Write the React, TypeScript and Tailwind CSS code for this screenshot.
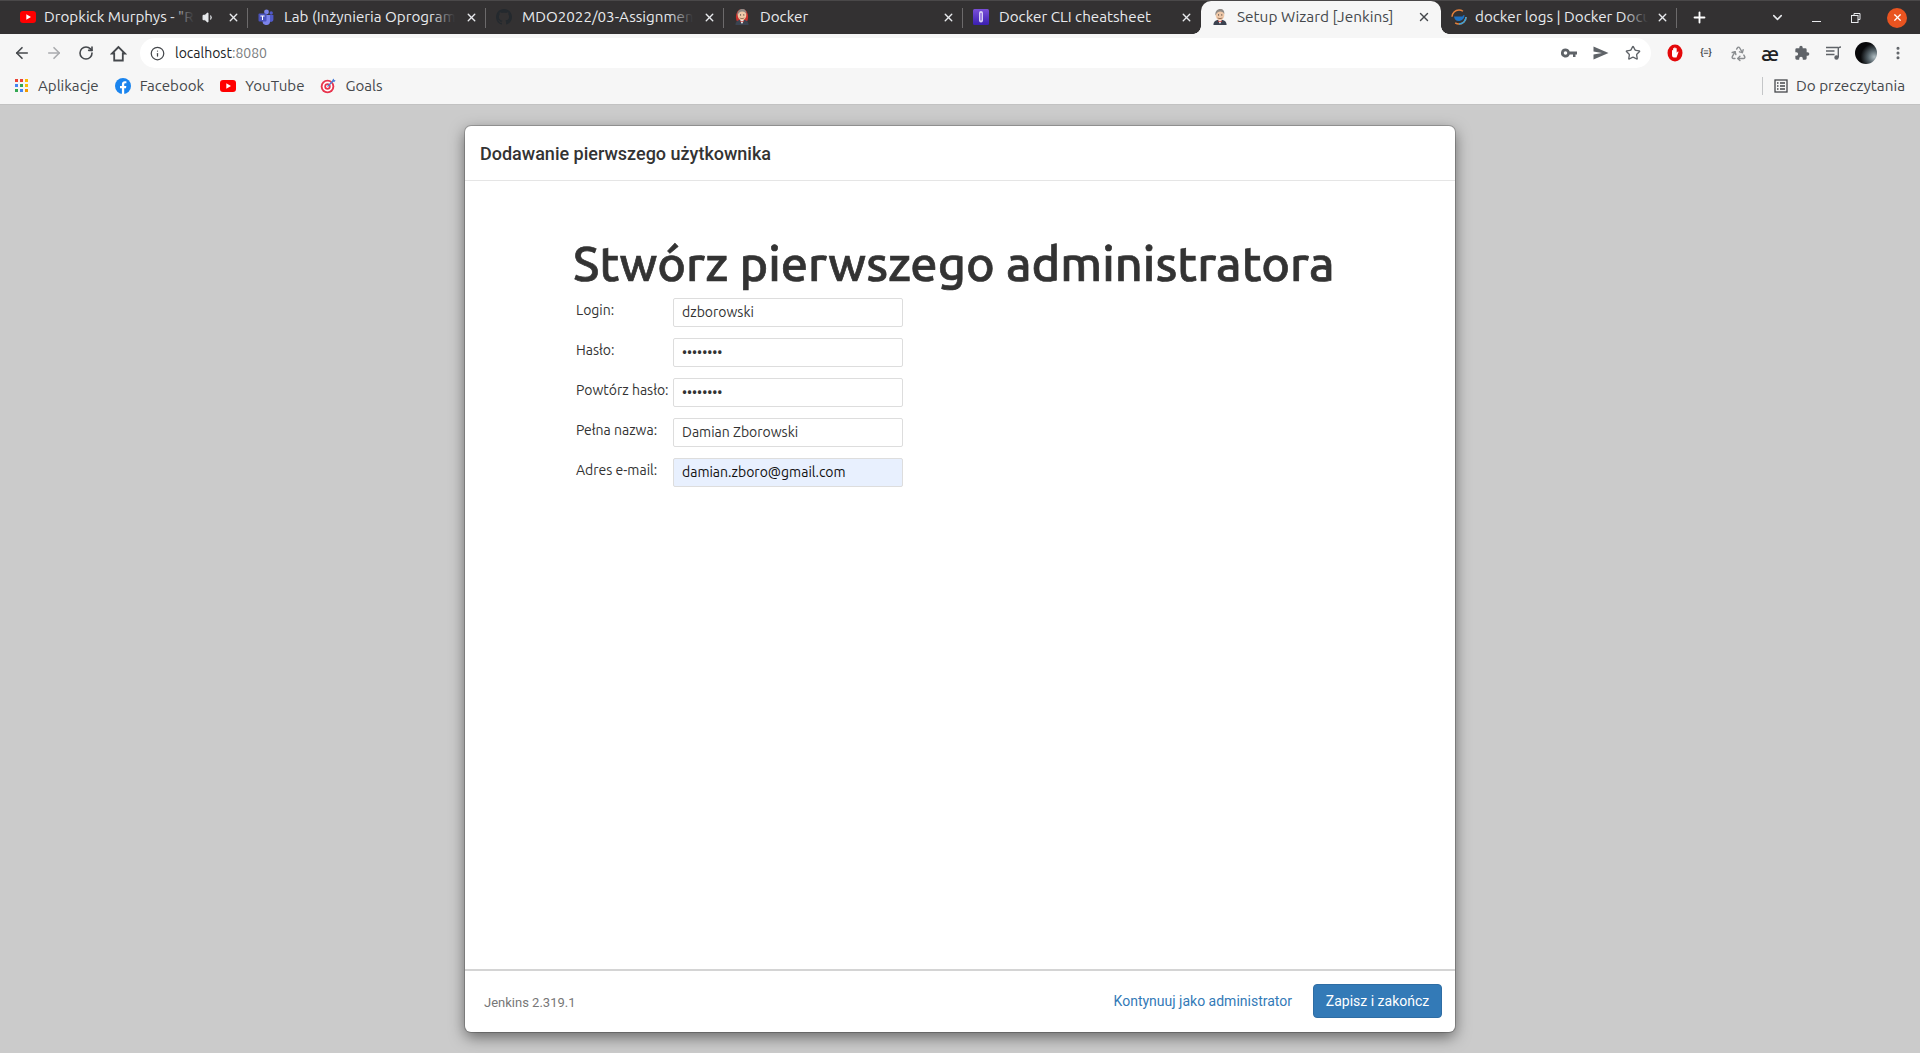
import { ArrowLeft, ArrowRight, RotateCw, Info, Star, MoreVertical, Recycle, X, Plus, ChevronDown, Volume1 } from 'lucide-react'
import { ReactNode } from 'react'

const ubuntu = 'font-["Ubuntu","Noto_Sans",sans-serif]'

function YoutubeIcon() {
  return (
    <svg width="16" height="12" viewBox="0 0 16 12">
      <rect width="16" height="12" rx="3" fill="#f00" />
      <path d="M6.3 3.2v5.6L11 6z" fill="#fff" />
    </svg>
  )
}

function TeamsIcon() {
  return (
    <svg width="16" height="16" viewBox="0 0 16 16">
      <circle cx="8.5" cy="3" r="2.4" fill="#7b83eb" />
      <circle cx="13.2" cy="4" r="1.7" fill="#5059c9" />
      <path d="M11 6h4.4v4.4a2.4 2.4 0 0 1-4.4 1.4z" fill="#5059c9" />
      <path d="M4 6h8v6a3.6 3.6 0 0 1-7.4.6z" fill="#7b83eb" />
      <rect x="0.5" y="4.5" width="8" height="8" rx="1" fill="#4b53bc" />
      <path d="M2.4 6.5h4.2v1H5v3.6H4V7.5H2.4z" fill="#fff" />
    </svg>
  )
}

function GithubIcon() {
  return (
    <svg width="16" height="16" viewBox="0 0 16 16">
      <path
        fill="#24292e"
        d="M8 0C3.6 0 0 3.6 0 8c0 3.5 2.3 6.500 5.500 7.600.4.100.5-.2.5-.4v-1.400c-2.200.5-2.700-1-2.700-1-.4-.9-.9-1.200-.9-1.200-.7-.5.100-.5.100-.5.800.100 1.200.8 1.200.8.700 1.200 1.900.9 2.300.7.100-.5.3-.9.5-1.100-1.800-.2-3.600-.9-3.600-4 0-.9.3-1.600.8-2.100-.1-.2-.4-1 .100-2.100 0 0 .7-.2 2.200.8.600-.2 1.300-.3 2-.3s1.400.1 2 .3c1.500-1 2.200-.8 2.200-.8.4 1.100.2 1.900.1 2.100.5.600.8 1.300.8 2.100 0 3.100-1.900 3.700-3.700 3.900.3.3.6.8.6 1.500v2.200c0 .2.100.5.6.4C13.700 14.500 16 11.500 16 8c0-4.400-3.600-8-8-8z"
      />
    </svg>
  )
}

function JenkinsIcon({ ring }: { ring?: boolean }) {
  return (
    <svg width="17" height="18" viewBox="0 0 17 18">
      {ring && <ellipse cx="8.500" cy="9" rx="6.500" ry="8.500" fill="#c8322e" />}
      <path d="M1.500 17.500c0-3.500 2.500-5.500 7-5.500s7 2 7 5.500z" fill="#3b4350" />
      <path d="M6.500 12h4L9 16H8z" fill="#f4f4f4" />
      <path d="M6.700 12.600l1.800.9 1.800-.9v2l-1.800-.8-1.800.8z" fill="#c3302c" />
      <ellipse cx="8.500" cy="6.800" rx="4.600" ry="5.600" fill="#efc8a8" />
      <path d="M3.700 7.500C3 3 5.500.4 8.800.4c3 0 4.800 2.200 4.200 5.600-.8-1.800-2-2.800-4.200-2.800-2.600 0-4 1.500-5.100 4.300z" fill="#8f8a86" />
      <circle cx="7" cy="6.800" r="0.600" fill="#333" />
      <circle cx="10.400" cy="6.800" r="0.600" fill="#333" />
      <path d="M6 10c1.500.9 3.500.9 5 0" stroke="#7a5a44" strokeWidth="0.800" fill="none" />
    </svg>
  )
}

function ClipIcon() {
  return (
    <svg width="16" height="16" viewBox="0 0 16 16">
      <defs>
        <linearGradient id="clip-grad" x1="0" y1="0" x2="0" y2="1">
          <stop offset="0" stopColor="#7a4fd8" />
          <stop offset="1" stopColor="#3a1fb0" />
        </linearGradient>
      </defs>
      <rect width="16" height="16" rx="1.500" fill="url(#clip-grad)" />
      <rect x="6" y="2" width="4" height="11.500" rx="2" fill="#d9d2f5" />
      <rect x="7.400" y="4" width="1.200" height="7.500" rx="0.600" fill="#7a4fd8" />
    </svg>
  )
}

function DockerDocsIcon() {
  return (
    <svg width="16" height="16" viewBox="0 0 16 16">
      <circle cx="8" cy="8" r="7" fill="none" stroke="#e4803a" strokeWidth="1.500" strokeDasharray="15 7" />
      <circle cx="8" cy="8" r="7" fill="none" stroke="#3aa0d8" strokeWidth="1.500" strokeDasharray="11 33" />
      <path d="M3 7.500h8.500c.4-1 1-1.500 2-1.500 0 3.500-2.500 6-6 6C5 12 3.300 10 3 7.500z" fill="#1d72c4" />
    </svg>
  )
}

function FacebookIcon() {
  return (
    <svg width="16" height="16" viewBox="0 0 16 16">
      <circle cx="8" cy="8" r="8" fill="#1a84ee" />
      <path d="M6.900 16V10.300H5V8h1.900V6.300c0-2 1.200-3 2.900-3 .9 0 1.600.1 1.600.1v1.900h-1c-1 0-1.200.6-1.200 1.200V8h2.100l-.3 2.300H9.200V16z" fill="#fff" />
    </svg>
  )
}

function GoalsIcon() {
  return (
    <svg width="16" height="16" viewBox="0 0 16 16">
      <circle cx="7.500" cy="8.500" r="6.800" fill="#e8344e" />
      <circle cx="7.500" cy="8.500" r="4.900" fill="#fff" />
      <circle cx="7.500" cy="8.500" r="3.200" fill="#e8344e" />
      <circle cx="7.500" cy="8.500" r="1.400" fill="#fff" />
      <path d="M7.500 8.500L13.500 2.500" stroke="#4a7fd8" strokeWidth="1.200" />
      <path d="M12 2.200l1.800-1.700.4 1.500 1.500.4L14 4.200z" fill="#4a7fd8" />
    </svg>
  )
}

function AppsIcon() {
  const colors = ['#ea4335', '#ea4335', '#fbbc05', '#4285f4', '#34a853', '#fbbc05', '#34a853', '#4285f4', '#f29900']
  return (
    <div className="grid grid-cols-3 gap-[2px] w-[13px]">
      {colors.map((c, i) => (
        <span key={i} className="w-[3px] h-[3px]" style={{ backgroundColor: c }} />
      ))}
    </div>
  )
}

function OperaStopIcon() {
  return (
    <svg width="16" height="18" viewBox="0 0 16 18">
      <ellipse cx="8" cy="9" rx="7.500" ry="8.500" fill="#e4080a" />
      <path d="M5 6.500c0-.8 1-.8 1.100 0V4.500c0-.8 1.200-.8 1.200 0v-.6c0-.8 1.200-.8 1.200 0v.8c0-.8 1.200-.8 1.200 0v4l.9-1c.6-.5 1.200 0 .8.600L9.500 13.500H7C5.500 13.500 5 12 5 11z" fill="#fff" />
    </svg>
  )
}

function HomeIcon() {
  return (
    <svg width="17" height="17" viewBox="0 0 17 17" fill="none" stroke="#45484c" strokeWidth="1.800" strokeLinejoin="miter">
      <path d="M8.500 2L2 8.500h2.200V15.500h8.600V8.500H15z" />
    </svg>
  )
}

function KeyIcon() {
  return (
    <svg width="16" height="10" viewBox="0 0 16 10">
      <path fillRule="evenodd" fill="#5f6368" d="M4.500 0.500a4.500 4.500 0 0 1 4.200 3H16v3h-1.500V9h-2.500V6.500h-3.300a4.500 4.500 0 1 1-4.200-6zm0 2.700a1.800 1.800 0 1 0 0 3.600 1.800 1.800 0 0 0 0-3.600z" />
    </svg>
  )
}

function SendIcon() {
  return (
    <svg width="16" height="14" viewBox="0 0 16 14">
      <path fill="#5f6368" d="M0.500 0.500L15.500 7 0.500 13.500V8.500L9 7 0.500 5.500z" />
    </svg>
  )
}

function PuzzleIcon() {
  return (
    <svg width="16" height="16" viewBox="0 0 24 24">
      <path fill="#5f6368" d="M20.500 11H19V7a2 2 0 0 0-2-2h-4V3.500a2.500 2.500 0 0 0-5 0V5H4a2 2 0 0 0-2 2v3.800h1.500a2.700 2.700 0 0 1 0 5.400H2V20a2 2 0 0 0 2 2h3.800v-1.500a2.700 2.700 0 0 1 5.400 0V22H17a2 2 0 0 0 2-2v-4h1.500a2.500 2.500 0 0 0 0-5z" />
    </svg>
  )
}

function MediaIcon() {
  return (
    <svg width="16" height="14" viewBox="0 0 16 14" fill="none" stroke="#5f6368" strokeWidth="1.400">
      <path d="M0 1.500h12M0 5h8.500M0 8.500h8.500" />
      <path d="M12.300 11.500V2.500c0-1 .8-1.500 2.700-1.500" />
      <circle cx="10.500" cy="11.500" r="1.500" fill="#5f6368" />
    </svg>
  )
}

function RestoreIcon() {
  return (
    <svg width="10" height="10" viewBox="0 0 10 10" fill="none" stroke="#e8eaed">
      <path d="M3 2.500V0.500h6v6H7" />
      <rect x="0.500" y="2.500" width="6.500" height="7" />
    </svg>
  )
}

function MoonAvatar() {
  return (
    <div className="w-[22px] h-[22px] rounded-full bg-[radial-gradient(circle_at_88%_68%,#aebbc0_0%,#56636a_26%,#08080a_56%)]" />
  )
}

interface TabProps {
  icon?: ReactNode
  title: string
  width: string
  gapClass?: string
  fade?: boolean
  sound?: boolean
  active?: boolean
  separator?: boolean
}

function Tab({ icon, title, width, gapClass = 'gap-[10px]', fade, sound, active, separator = true }: TabProps) {
  if (active) {
    return (
      <div className={`${width} h-[33px] shrink-0 bg-[#f6f6f6] rounded-t-[10px] flex items-center pl-[11px] pr-[10px] pb-[1px] gap-[9px] relative`}>
        <span className="absolute -left-[8px] bottom-0 w-[8px] h-[8px] bg-[radial-gradient(circle_at_0_0,transparent_7.5px,#f6f6f6_8px)]" />
        <span className="absolute -right-[8px] bottom-0 w-[8px] h-[8px] bg-[radial-gradient(circle_at_100%_0,transparent_7.5px,#f6f6f6_8px)]" />
        <span className="w-[16px] flex justify-center shrink-0"><JenkinsIcon /></span>
        <span className="flex-1 text-[15.4px] text-[#45484c] whitespace-nowrap overflow-hidden">{title}</span>
        <X size={14} strokeWidth={2.4} className="text-[#45484c]" />
      </div>
    )
  }
  return (
    <div className={`${width} ${gapClass} h-[33px] shrink-0 flex items-center pl-[10px] pr-[8px] pb-[1px] relative`}>
      <span className="w-[16px] flex justify-center shrink-0">{icon}</span>
      <span className="relative flex-1 min-w-0 text-[15.2px] text-[#e8eaed] whitespace-nowrap overflow-hidden">
        {title}
        {fade && <span className="absolute right-0 top-0 bottom-0 w-[24px] bg-gradient-to-r from-transparent to-[#333132]" />}
      </span>
      {sound && <Volume1 size={13} fill="#e8eaed" className="text-[#e8eaed] mr-[4px]" />}
      <X size={13} strokeWidth={2.6} className="text-[#e8eaed] shrink-0" />
      {separator && <span className="absolute right-0 top-[7px] h-[20px] w-px bg-[#6c6a6b]" />}
    </div>
  )
}

function TabStrip() {
  return (
    <div className="h-[34px] bg-[#333132] border-t border-[#4a4849] flex items-end pl-[10px]">
      <Tab icon={<YoutubeIcon />} title={'Dropkick Murphys - "Ro'} width="w-[238px]" gapClass="gap-[8px]" fade sound />
      <Tab icon={<TeamsIcon />} title="Lab (Inżynieria Oprogram" width="w-[238px]" fade />
      <Tab icon={<GithubIcon />} title="MDO2022/03-Assignment" width="w-[238px]" fade />
      <Tab icon={<JenkinsIcon ring />} title="Docker" width="w-[239px]" />
      <Tab icon={<ClipIcon />} title="Docker CLI cheatsheet" width="w-[238px]" separator={false} />
      <Tab title="Setup Wizard [Jenkins]" width="w-[240px]" active />
      <Tab icon={<DockerDocsIcon />} title="docker logs | Docker Docu" width="w-[236px]" gapClass="gap-[8px]" fade />
      <div className="w-[44px] flex justify-center items-center h-[33px]">
        <Plus size={17} strokeWidth={2.6} className="text-white" />
      </div>
      <div className="flex-1 h-[33px] flex items-center justify-end pr-[13px]">
        <ChevronDown size={15} strokeWidth={2.4} className="text-[#e8eaed] mr-[27px]" />
        <span className="w-[9px] h-px bg-[#e8eaed] mr-[30px] mt-[8px]" />
        <span className="mr-[26px] flex"><RestoreIcon /></span>
        <span className="w-[20px] h-[20px] rounded-full bg-[#e95420] flex items-center justify-center">
          <X size={11} strokeWidth={2.6} className="text-white" />
        </span>
      </div>
    </div>
  )
}

function Toolbar() {
  return (
    <div className="h-[38px] bg-[#f6f6f6] flex items-center pl-[13px]">
      <ArrowLeft size={18} strokeWidth={2.2} className="text-[#45484c] mr-[14px]" />
      <ArrowRight size={18} strokeWidth={2.2} className="text-[#a9abae] mr-[15px]" />
      <RotateCw size={16} strokeWidth={2.4} className="text-[#45484c] mr-[16px]" />
      <HomeIcon />
      <div className="flex-1 h-[30px] ml-[13px] bg-white rounded-full flex items-center pl-[10px] pr-[10px] mr-[9px]">
        <Info size={15} strokeWidth={2} className="text-[#45484c] mr-[10px]" />
        <span className="text-[14px] text-[#202124]">localhost</span>
        <span className="text-[14px] text-[#7a7d80]">:8080</span>
        <div className="ml-auto flex items-center gap-[16px]">
          <KeyIcon />
          <SendIcon />
          <Star size={16} strokeWidth={2} className="text-[#5f6368]" />
        </div>
      </div>
      <div className="flex items-center pr-[6px]">
        <span className="w-[30px] flex justify-center"><OperaStopIcon /></span>
        <span className="w-[32px] text-center text-[9px] font-bold text-[#45484c]">{'{≡}'}</span>
        <span className="w-[32px] flex justify-center"><Recycle size={17} strokeWidth={2} className="text-[#8a8d90]" /></span>
        <span className="w-[32px] text-center text-[21px] leading-none font-medium text-[#202124]">æ</span>
        <span className="w-[32px] flex justify-center"><PuzzleIcon /></span>
        <span className="w-[32px] flex justify-center"><MediaIcon /></span>
        <span className="w-[32px] flex justify-center"><MoonAvatar /></span>
        <span className="w-[32px] flex justify-center"><MoreVertical size={16} strokeWidth={2.6} className="text-[#5f6368]" /></span>
      </div>
    </div>
  )
}

function Bookmark({ icon, label }: { icon: ReactNode; label: string }) {
  return (
    <div className="flex items-center gap-[9px]">
      <span className="w-[16px] flex justify-center">{icon}</span>
      <span className="text-[15.1px] text-[#45484c]">{label}</span>
    </div>
  )
}

function BookmarksBar() {
  return (
    <div className="h-[33px] bg-[#f6f6f6] border-b border-[#c2c2c2] flex items-center pl-[13px] pr-[15px] pb-[4px] gap-[16px]">
      <Bookmark icon={<AppsIcon />} label="Aplikacje" />
      <Bookmark icon={<FacebookIcon />} label="Facebook" />
      <Bookmark icon={<YoutubeIcon />} label="YouTube" />
      <Bookmark icon={<GoalsIcon />} label="Goals" />
      <div className="ml-auto flex items-center">
        <span className="w-px h-[18px] bg-[#c4c6c8] mr-[11px]" />
        <svg width="14" height="14" viewBox="0 0 14 14" className="mr-[8px]" fill="none" stroke="#45484c" strokeWidth="1.300">
          <rect x="1" y="1" width="12" height="12" />
          <path d="M3 4h1.500M3 7h1.500M3 10h1.500M6 4h5M6 7h5M6 10h5" />
        </svg>
        <span className="text-[15.3px] text-[#45484c]">Do przeczytania</span>
      </div>
    </div>
  )
}

function Field({ label, value, type = 'text', autofill }: { label: string; value: string; type?: string; autofill?: boolean }) {
  return (
    <div className="flex mb-[11px]">
      <label className="w-[100px] shrink-0 pl-[3px] pt-[2px] text-[14px] leading-[20px] text-[#333]">{label}</label>
      <input
        readOnly
        type={type}
        value={value}
        className={`w-[230px] h-[29px] rounded-[2px] border border-[#ddd] px-[8px] pb-[1px] text-[14px] outline-none ${autofill ? 'bg-[#e8f0fe] text-[#111]' : 'bg-white text-[#333]'}`}
      />
    </div>
  )
}

export default function App() {
  return (
    <div className={`w-[1920px] h-[1053px] flex flex-col overflow-hidden bg-[#cbcbcb] ${ubuntu}`}>
      <TabStrip />
      <Toolbar />
      <BookmarksBar />
      <div className="flex-1 flex justify-center pt-[21px] pb-[21px]">
        <div className="w-[990px] flex flex-col bg-white rounded-[6px] shadow-[0_5px_15px_rgba(0,0,0,0.5),0_0_0_1px_rgba(0,0,0,0.2)]">
          <div className="h-[55px] border-b border-[#e5e5e5] flex items-center pl-[15px] pt-[1px] font-['Roboto',sans-serif] text-[18px] font-medium text-[#333]">
            Dodawanie pierwszego użytkownika
          </div>
          <div className="flex-1 pl-[108px] pt-[56px]">
            <h1 className="text-[48.6px] leading-[53px] font-medium [-webkit-text-stroke:0.7px_#333] text-[#333] mb-[8px] whitespace-nowrap">
              Stwórz pierwszego administratora
            </h1>
            <Field label="Login:" value="dzborowski" />
            <Field label="Hasło:" value="password" type="password" />
            <Field label="Powtórz hasło:" value="password" type="password" />
            <Field label="Pełna nazwa:" value="Damian Zborowski" />
            <Field label="Adres e-mail:" value="damian.zboro@gmail.com" autofill />
          </div>
          <div className="h-[63px] border-t-2 border-[#d4d4d4] flex items-center pl-[19px] pr-[13px] pb-[1px] font-['Roboto',sans-serif]">
            <span className="text-[13px] text-[#777] mt-[3px]">Jenkins 2.319.1</span>
            <span className="ml-auto text-[14px] text-[#337ab7] mr-[21px]">Kontynuuj jako administrator</span>
            <button className="h-[34px] w-[129px] rounded-[4px] bg-[#337ab7] border border-[#2e6da4] text-white text-[14px]">
              Zapisz i zakończ
            </button>
          </div>
        </div>
      </div>
    </div>
  )
}
